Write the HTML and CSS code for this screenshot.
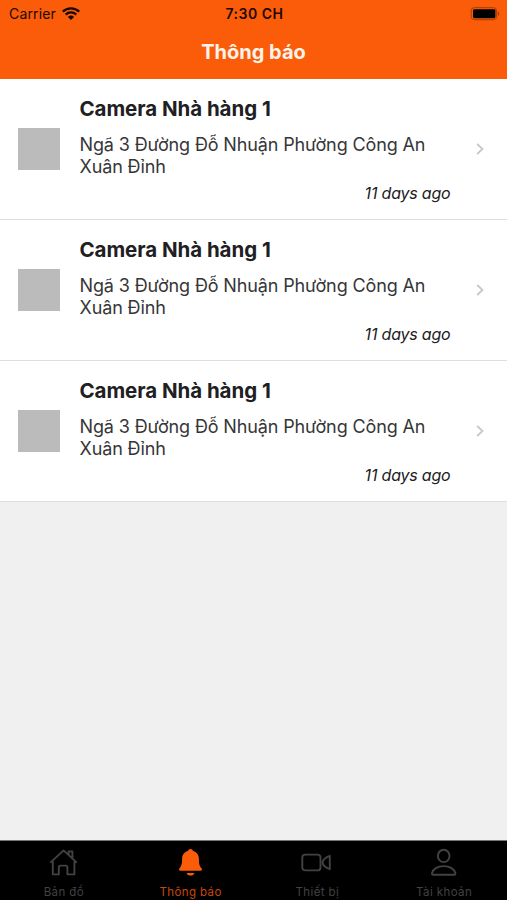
FILE: index.html
```
<!DOCTYPE html>
<html lang="vi">
	<head>
		<meta charset="utf-8">
		<title>Thông báo</title>
		<link rel="stylesheet" href="styles.css">
	</head>
	<body>
		<header>
			<div class="status-bar">
				<div class="carrier">
					<span>Carrier</span>
					<svg width="20" height="16" viewBox="0 0 20 16">
						<path d="M1.8 5.6a11.8 11.8 0 0 1 16.4 0M4.7 8.6a7.6 7.6 0 0 1 10.6 0" fill="none" stroke="#1a0800" stroke-width="2.3" />
						<path d="M10 14L6.9 10.9a4.4 4.4 0 0 1 6.2 0z" fill="#1a0800" />
					</svg>
				</div>
				<div class="time">7:30 CH</div>
				<div class="battery">
					<svg width="30" height="14" viewBox="0 0 30 14">
						<rect x="1.2" y="0.7" width="25.4" height="12" rx="3" fill="none" stroke="#a83c05" />
						<rect x="3" y="2.2" width="22.4" height="9" rx="1.4" fill="#000" />
						<path d="M27.9 4.6c1.8.7 1.8 3.6 0 4.3z" fill="#a83c05" />
					</svg>
				</div>
			</div>
			<h1>Thông báo</h1>
		</header>
		<main>
			<div class="item">
				<div class="thumb"></div>
				<div class="content">
					<h2>Camera Nhà hàng 1</h2>
					<p>Ngã 3 Đường Đỗ Nhuận Phường Công An<br>Xuân Đỉnh</p>
					<div class="date">11 days ago</div>
				</div>
				<svg class="chevron" width="8" height="12" viewBox="0 0 8 12"><path d="M1.2 1l5.3 5-5.3 5" /></svg>
			</div>
			<div class="item">
				<div class="thumb"></div>
				<div class="content">
					<h2>Camera Nhà hàng 1</h2>
					<p>Ngã 3 Đường Đỗ Nhuận Phường Công An<br>Xuân Đỉnh</p>
					<div class="date">11 days ago</div>
				</div>
				<svg class="chevron" width="8" height="12" viewBox="0 0 8 12"><path d="M1.2 1l5.3 5-5.3 5" /></svg>
			</div>
			<div class="item">
				<div class="thumb"></div>
				<div class="content">
					<h2>Camera Nhà hàng 1</h2>
					<p>Ngã 3 Đường Đỗ Nhuận Phường Công An<br>Xuân Đỉnh</p>
					<div class="date">11 days ago</div>
				</div>
				<svg class="chevron" width="8" height="12" viewBox="0 0 8 12"><path d="M1.2 1l5.3 5-5.3 5" /></svg>
			</div>
		</main>
		<nav>
			<a class="tab">
				<svg width="32" height="32" viewBox="0 0 32 32">
					<path d="M3.4 16.6L16.6 4.4l13.2 12.2M21.6 8.6V5.4h3.8v6.8M5.8 15.4v13h6v-7.2a1.6 1.6 0 0 1 1.6-1.6h5.4a1.6 1.6 0 0 1 1.6 1.6v7.2h7v-13" />
				</svg>
				<span>Bản đồ</span>
			</a>
			<a class="tab active">
				<svg width="32" height="32" viewBox="0 0 32 32">
					<path d="M16.5 3c-1.2 0-2 .8-2.4 1.8-4.6 1.6-6 4.700-6 8.200 0 5.500-.8 7-2.600 9.300-1 1.200-.3 2.400 1 2.400h20c1.300 0 2-1.200 1-2.400-1.800-2.300-2.600-3.800-2.600-9.300 0-3.500-1.400-6.600-6-8.200C18.500 3.800 17.700 3 16.500 3zM12.600 26.900h7.800c-.6 1.800-2 2.600-3.900 2.600s-3.300-.8-3.900-2.600z" />
				</svg>
				<span>Thông báo</span>
			</a>
			<a class="tab">
				<svg width="32" height="32" viewBox="0 0 32 32">
					<rect x="1.3" y="8.6" width="18.2" height="15.8" rx="3" />
					<path d="M28.8 9.800v13.400q-7.200-2.800-7.200-6.700t7.200-6.700z" />
				</svg>
				<span>Thiết bị</span>
			</a>
			<a class="tab">
				<svg width="32" height="32" viewBox="0 0 32 32">
					<ellipse cx="15.7" cy="9.9" rx="5.8" ry="6.2" />
					<path d="M5.3 28.7h20.8c1 0 1.5-.6 1.3-1.5-.9-4-5.5-7.1-11.7-7.1S4.9 23.2 4 27.2c-.2.900.3 1.500 1.300 1.500z" />
				</svg>
				<span>Tài khoản</span>
			</a>
		</nav>
	</body>
</html>
```
FILE: styles.css
```
* {
	box-sizing: border-box;
}

body {
	margin: 0;
	height: 900px;
	display: flex;
	flex-direction: column;
	overflow: hidden;
	background-color: #f0f0f0;
	color: #202022;
	font-family: Inter, "Liberation Sans", sans-serif;
}

h1,
h2,
p {
	margin: 0;
}

header {
	height: 79px;
	background-color: #fb5c0a;
}

.status-bar {
	height: 27px;
	padding: 0 7px 0 9px;
	display: grid;
	grid-template-columns: 1fr auto 1fr;
	align-items: center;
	color: #1a0800;
	font-size: 14px;
	line-height: 27px;
}

.carrier {
	display: flex;
	align-items: center;
	gap: 5px;
	letter-spacing: 0.15px;
}

.time {
	font-weight: 600;
	letter-spacing: 0.5px;
}

.battery {
	display: flex;
	justify-content: flex-end;
}

h1 {
	color: #fff3ea;
	font-size: 20px;
	font-weight: 700;
	line-height: 51px;
	text-align: center;
}

main {
	flex: 1;
}

.item {
	height: 141px;
	padding: 0 23px 0 18px;
	display: flex;
	align-items: center;
	background-color: #fff;
	border-bottom: 1px solid #dfdfdf;
}

.thumb {
	width: 42px;
	height: 42px;
	margin-right: 19.5px;
	background-color: #bbb;
}

.content {
	width: 371px;
}

h2 {
	font-size: 20.5px;
	font-weight: 650;
	line-height: 28px;
	letter-spacing: -0.05px;
}

p {
	margin-top: 11px;
	font-size: 18px;
	line-height: 22px;
	letter-spacing: -0.13px;
	color: #363638;
	white-space: nowrap;
}

.date {
	margin-top: 4px;
	font-size: 16px;
	font-style: italic;
	line-height: 22px;
	letter-spacing: -0.2px;
	text-align: right;
}

.chevron {
	margin-left: auto;
	fill: none;
	stroke: #c8c8cb;
	stroke-width: 1.8;
}

nav {
	height: 60px;
	display: flex;
	background-color: #000;
	border-top: 1px solid #777;
}

.tab {
	flex: 1;
	display: flex;
	flex-direction: column;
	align-items: center;
	color: #424242;
	font-size: 11.5px;
	line-height: 16px;
	letter-spacing: 0.4px;
}

.tab svg {
	margin: 5px 0 6px;
	fill: none;
	stroke: currentColor;
	stroke-width: 1.9;
	stroke-linejoin: round;
}

.tab span {
	padding-left: 1px;
}

.active {
	color: #fb5c0a;
}

.active svg {
	fill: currentColor;
	stroke: none;
}

.active span {
	color: #c94808;
}
```
